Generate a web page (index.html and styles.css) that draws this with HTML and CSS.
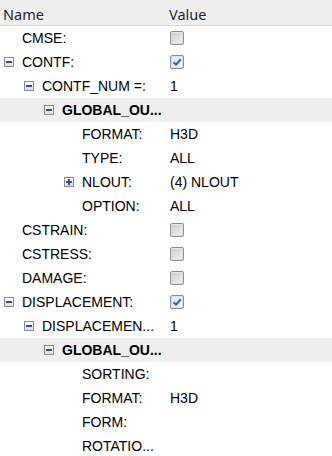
FILE: index.html
```html
<!DOCTYPE html>
<html lang="en">
<head>
    <meta charset="UTF-8">
    <meta name="viewport" content="width=device-width, initial-scale=1.0">
    <title>Output Tree</title>
    <link rel="stylesheet" href="styles.css">
</head>
<body>
    <div class="tree">
        <div class="head">
            <div class="name">Name</div>
            <div class="value">Value</div>
        </div>

        <div class="row">
            <div class="name l0"><span class="tg none"></span>CMSE:</div>
            <div class="value"><span class="cb"></span></div>
        </div>
        <div class="row">
            <div class="name l0"><span class="tg"></span>CONTF:</div>
            <div class="value"><span class="cb on"><svg viewBox="0 0 12 12"><path d="M2.5 6.2 L5 8.7 L9.8 3.2"/></svg></span></div>
        </div>
        <div class="row">
            <div class="name l1"><span class="tg"></span>CONTF_NUM =:</div>
            <div class="value">1</div>
        </div>
        <div class="row group">
            <div class="name l2"><span class="tg"></span>GLOBAL_OU...</div>
            <div class="value"></div>
        </div>
        <div class="row">
            <div class="name l3"><span class="tg none"></span>FORMAT:</div>
            <div class="value">H3D</div>
        </div>
        <div class="row">
            <div class="name l3"><span class="tg none"></span>TYPE:</div>
            <div class="value">ALL</div>
        </div>
        <div class="row">
            <div class="name l3"><span class="tg plus"></span>NLOUT:</div>
            <div class="value">(4) NLOUT</div>
        </div>
        <div class="row">
            <div class="name l3"><span class="tg none"></span>OPTION:</div>
            <div class="value">ALL</div>
        </div>
        <div class="row">
            <div class="name l0"><span class="tg none"></span>CSTRAIN:</div>
            <div class="value"><span class="cb"></span></div>
        </div>
        <div class="row">
            <div class="name l0"><span class="tg none"></span>CSTRESS:</div>
            <div class="value"><span class="cb"></span></div>
        </div>
        <div class="row">
            <div class="name l0"><span class="tg none"></span>DAMAGE:</div>
            <div class="value"><span class="cb"></span></div>
        </div>
        <div class="row">
            <div class="name l0"><span class="tg"></span>DISPLACEMENT:</div>
            <div class="value"><span class="cb on"><svg viewBox="0 0 12 12"><path d="M2.5 6.2 L5 8.7 L9.8 3.2"/></svg></span></div>
        </div>
        <div class="row">
            <div class="name l1"><span class="tg"></span>DISPLACEMEN...</div>
            <div class="value">1</div>
        </div>
        <div class="row group">
            <div class="name l2"><span class="tg"></span>GLOBAL_OU...</div>
            <div class="value"></div>
        </div>
        <div class="row">
            <div class="name l3"><span class="tg none"></span>SORTING:</div>
            <div class="value"></div>
        </div>
        <div class="row">
            <div class="name l3"><span class="tg none"></span>FORMAT:</div>
            <div class="value">H3D</div>
        </div>
        <div class="row">
            <div class="name l3"><span class="tg none"></span>FORM:</div>
            <div class="value"></div>
        </div>
        <div class="row">
            <div class="name l3"><span class="tg none"></span>ROTATIO...</div>
            <div class="value"></div>
        </div>
    </div>
</body>
</html>
```

FILE: styles.css
```css
body, html {
    margin: 0;
    padding: 0;
    background: #fff;
}

.tree {
    width: 332px;
    font-family: "Liberation Sans", Arial, sans-serif;
    font-size: 14px;
    color: #000;
}

.head {
    display: flex;
    align-items: center;
    height: 26px;
    box-sizing: border-box;
    padding-top: 2px;
    background: #f0f0f0;
    border-bottom: 1px solid #d8d8d8;
    font-family: "Noto Sans", sans-serif;
    font-size: 14.5px;
    color: #1c2333;
}

.head .name {
    width: 166px;
    padding-left: 3px;
    box-sizing: border-box;
}

.head .value {
    padding-left: 3px;
}

.row {
    display: flex;
    align-items: center;
    height: 24px;
}

.row.group {
    background: #efefef;
    font-weight: bold;
}

.name {
    width: 166px;
    box-sizing: border-box;
    display: flex;
    align-items: center;
    white-space: nowrap;
    overflow: hidden;
}

.value {
    flex: 1;
    padding-left: 4px;
    display: flex;
    align-items: center;
    white-space: nowrap;
}

.l0 { padding-left: 4px; }
.l1 { padding-left: 24px; }
.l2 { padding-left: 44px; }
.l3 { padding-left: 64px; }

/* expand / collapse box */
.tg {
    position: relative;
    flex: none;
    width: 8px;
    height: 8px;
    margin-right: 8px;
    border: 1px solid #8f8f8f;
    background: linear-gradient(#ffffff, #dcdcdc);
}

.tg::before {
    content: "";
    position: absolute;
    left: 1px;
    top: 3px;
    width: 6px;
    height: 2px;
    background: #3c5283;
}

.tg.plus::after {
    content: "";
    position: absolute;
    left: 3px;
    top: 1px;
    width: 2px;
    height: 6px;
    background: #3c5283;
}

.tg.none {
    visibility: hidden;
}

/* checkbox */
.cb {
    width: 12px;
    height: 12px;
    border: 1px solid #8e8e8e;
    border-radius: 2px;
    background: linear-gradient(135deg, #c9c9c9, #f2f2f2);
    box-shadow: inset 0 0 0 1px #e2e2e2;
    display: flex;
}

.cb.on {
    background: linear-gradient(135deg, #dedede, #ffffff);
}

.cb svg {
    width: 12px;
    height: 12px;
}

.cb path {
    fill: none;
    stroke: #1f6fc5;
    stroke-width: 2.2;
}
```
